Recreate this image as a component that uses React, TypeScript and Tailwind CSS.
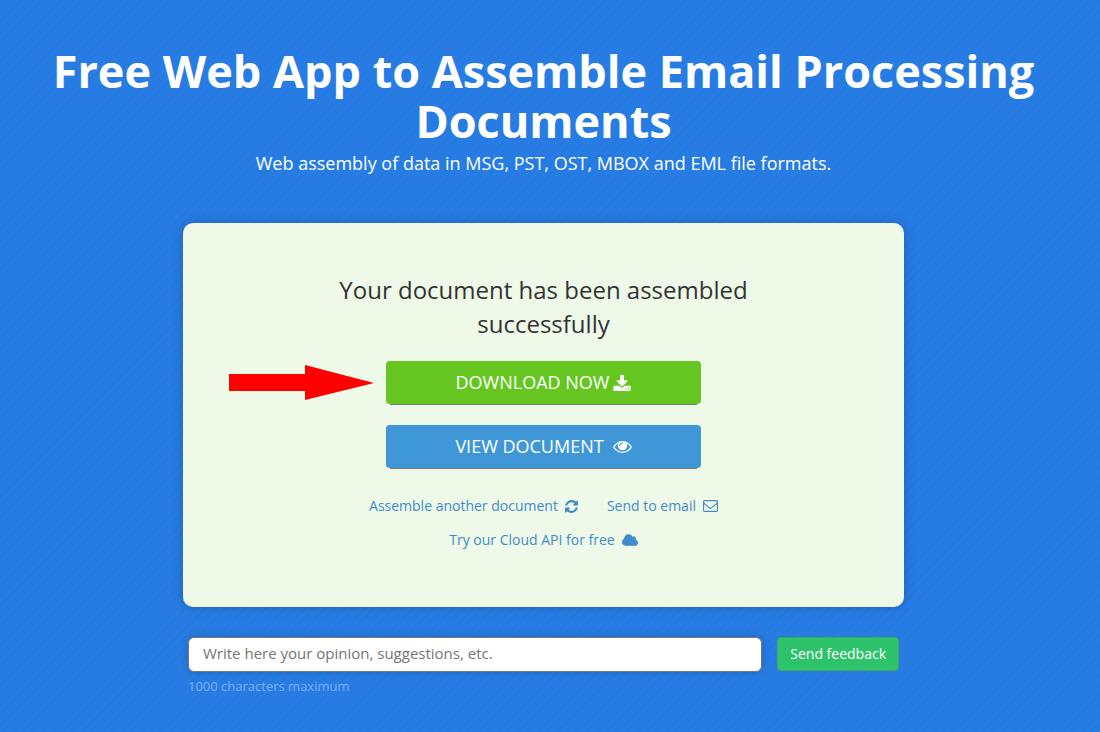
import React from "react";

type IconProps = { viewBox: string; d: string; className: string };

function Icon({ viewBox, d, className }: IconProps) {
  return (
    <svg viewBox={viewBox} className={className} fill="currentColor" aria-hidden="true">
      <path d={d} />
    </svg>
  );
}

const download =
  "M1280 1344q0-26-19-45t-45-19-45 19-19 45 19 45 45 19 45-19 19-45zm256 0q0-26-19-45t-45-19-45 19-19 45 19 45 45 19 45-19 19-45zm128-224v320q0 40-28 68t-68 28h-1472q-40 0-68-28t-28-68v-320q0-40 28-68t68-28h465l135 136q58 56 136 56t136-56l136-136h464q40 0 68 28t28 68zm-325-569q17 41-14 70l-448 448q-18 19-45 19t-45-19l-448-448q-31-29-14-70 17-39 59-39h256v-448q0-26 19-45t45-19h256q26 0 45 19t19 45v448h256q42 0 59 39z";
const eye =
  "M1664 576q-152-236-381-353 61 104 61 225 0 185-131.5 316.5t-316.5 131.5-316.5-131.5-131.5-316.5q0-121 61-225-229 117-381 353 133 205 333.5 326.5t434.5 121.5 434.5-121.5 333.5-326.5zm-720-384q0-20-14-34t-34-14q-125 0-214.5 89.5t-89.5 214.5q0 20 14 34t34 14 34-14 14-34q0-86 61-147t147-61q20 0 34-14t14-34zm848 384q0 34-20 69-140 230-376.5 368.5t-499.5 138.5-499.5-139-376.5-368q-20-35-20-69t20-69q140-229 376.5-368t499.5-139 499.5 139 376.5 368q20 35 20 69z";
const refresh =
  "M1511 928q0 5-1 7-64 268-268 434.5t-478 166.5q-146 0-282.5-55t-243.5-157l-129 129q-19 19-45 19t-45-19-19-45v-448q0-26 19-45t45-19h448q26 0 45 19t19 45-19 45l-137 137q71 66 161 102t187 36q134 0 250-65t186-179q11-17 53-117 8-23 30-23h192q13 0 22.5 9.5t9.5 22.5zm25-800v448q0 26-19 45t-45 19h-448q-26 0-45-19t-19-45 19-45l138-138q-148-137-349-137-134 0-250 65t-186 179q-11 17-53 117-8 23-30 23h-199q-13 0-22.5-9.5t-9.5-22.5v-7q65-268 270-434.5t480-166.5q146 0 284 55.5t245 156.5l130-129q19-19 45-19t45 19 19 45z";
const envelope =
  "M1664 1504v-768q-32 36-69 66-268 206-426 338-51 43-83 67t-86.5 48.5-102.5 24.5h-2q-48 0-102.5-24.5t-86.5-48.5-83-67q-158-132-426-338-37-30-69-66v768q0 13 9.5 22.5t22.5 9.5h1472q13 0 22.5-9.5t9.5-22.5zm0-1051v-24.5l-.5-13-3-12.5-5.5-9-9-7.5-14-2.5h-1472q-13 0-22.5 9.5t-9.5 22.5q0 168 147 284 193 152 401 317 6 5 35 29.5t46 37.5 44.5 31.5 50.5 27.5 43 9h2q20 0 43-9t50.5-27.5 44.5-31.5 46-37.5 35-29.5q208-165 401-317 54-43 100.5-115.5t46.5-131.5zm128-37v1088q0 66-47 113t-113 47h-1472q-66 0-113-47t-47-113v-1088q0-66 47-113t113-47h1472q66 0 113 47t47 113z";
const cloud =
  "M1920 896q0 159-112.5 271.5t-271.5 112.5h-1088q-185 0-316.5-131.5t-131.5-316.5q0-132 71-241.5t187-163.5q-2-28-2-43 0-212 150-362t362-150q158 0 286.5 88t187.5 230q70-62 166-62 106 0 181 75t75 181q0 75-41 138 129 30 213 134.5t84 239.5z";

export default function App() {
  return (
    <main className="min-h-screen bg-[#277de5] bg-[repeating-linear-gradient(135deg,rgba(0,0,0,0.02)_0px,rgba(0,0,0,0.02)_3px,transparent_4px,transparent_7px)] pt-[46px] pr-[13px] pb-8 font-['Open_Sans','Noto_Sans',sans-serif] text-white">
      <header className="px-10 text-center">
        <h1 className="text-[45px] leading-[50px] font-bold">
          Free Web App to Assemble Email Processing Documents
        </h1>
        <p className="mt-1 text-[18px] leading-[26px]">
          Web assembly of data in MSG, PST, OST, MBOX and EML file formats.
        </p>
      </header>

      <div className="mx-auto mt-[47px] max-w-[721px]">
        <section className="rounded-[10px] bg-[#eef9e8] pt-[50px] pb-[50px] text-center shadow-[0_0_12px_rgba(0,0,0,0.22)]">
          <h2 className="mx-auto max-w-[480px] text-[24px] leading-[34px] text-[#333333]">
            Your document has been assembled successfully
          </h2>
          <div className="mt-5 grid grid-cols-[1fr_315px_1fr] items-center gap-x-3 gap-y-[21px]">
            <svg viewBox="0 0 145 36" className="h-9 w-[145px] justify-self-end" aria-hidden="true">
              <path d="M0 9h76V0l69 18-69 17v-9H0z" fill="#ff0000" />
            </svg>
            <button
              type="button"
              className="flex h-[43px] items-center justify-center gap-1 rounded-[4px] bg-[#65c622] text-[18px] shadow-[0_5px_0_-4px_#777777]"
            >
              DOWNLOAD NOW
              <Icon viewBox="0 0 1664 1536" d={download} className="h-4 w-[18px]" />
            </button>
            <button
              type="button"
              className="col-start-2 flex h-[43px] items-center justify-center gap-[9px] rounded-[4px] bg-[#3f97d7] text-[18px] shadow-[0_5px_0_-4px_#777777]"
            >
              VIEW DOCUMENT
              <Icon viewBox="0 0 1792 1152" d={eye} className="h-3 w-[19px]" />
            </button>
          </div>
          <nav className="mt-[21px] flex flex-col items-center text-[14px] leading-[34px] text-[#428bca]">
            <div className="flex gap-[29px]">
              <a href="#assemble" className="flex items-center gap-[7px]">
                Assemble another document
                <Icon viewBox="0 0 1536 1536" d={refresh} className="size-[13px]" />
              </a>
              <a href="#email" className="flex items-center gap-[7px]">
                Send to email
                <Icon viewBox="0 256 1792 1408" d={envelope} className="h-3 w-[15px]" />
              </a>
            </div>
            <a href="#cloud" className="flex items-center gap-[7px]">
              Try our Cloud API for free
              <Icon viewBox="0 -128 1920 1408" d={cloud} className="h-3 w-4" />
            </a>
          </nav>
        </section>

        <form className="mt-[30px] px-[5px]">
          <div className="flex gap-[15px]">
            <input
              type="text"
              aria-label="Feedback"
              maxLength={1000}
              placeholder="Write here your opinion, suggestions, etc."
              className="h-[35px] min-w-0 flex-1 rounded-[6px] border border-[#777777] bg-white px-[14px] pb-[3px] text-[15px] text-[#333333] shadow-[0_0_10px_rgba(0,0,0,0.2)] placeholder:text-[#757575]"
            />
            <button
              type="button"
              className="h-[34px] rounded-[4px] border border-[#3da85c] bg-[#2cc36b] px-3 pb-[2px] text-[14px]"
            >
              Send feedback
            </button>
          </div>
          <p className="mt-1 text-[13px] leading-5 text-[#79b0f2]">1000 characters maximum</p>
        </form>
      </div>
    </main>
  );
}
